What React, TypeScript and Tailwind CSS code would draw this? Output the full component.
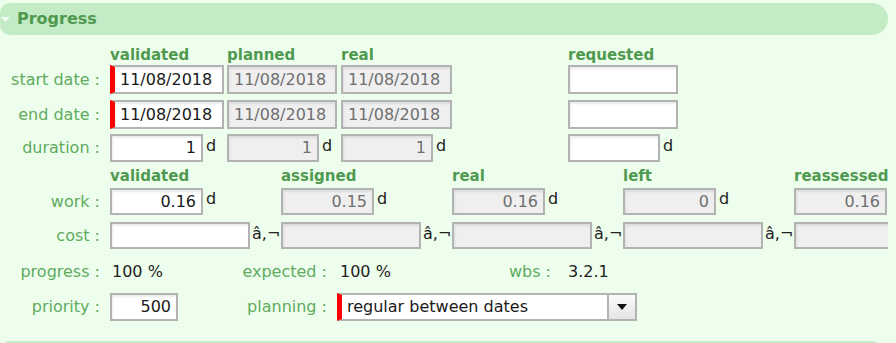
import React from "react";

// shared styles
const font = "font-['DejaVu_Sans',Verdana,sans-serif]";
const labelStyle = "text-[16px] leading-[18px] text-[#5fab5f] text-right whitespace-nowrap";
const headStyle = "text-[15px] leading-[18px] font-bold text-[#4f9a50] whitespace-nowrap";
const inputBase =
  "border-2 border-[#b3b3b3] text-[16px] leading-[18px] flex items-center overflow-hidden whitespace-nowrap shadow-[inset_1px_2px_2px_rgba(0,0,0,0.08)]";
const unitStyle = "text-[16px] leading-[18px] text-[#222] self-start whitespace-nowrap";

type BoxProps = {
  value?: string;
  w: string;
  h?: string;
  disabled?: boolean;
  required?: boolean;
  right?: boolean;
};

const Box = ({ value = "", w, h = "h-[28px]", disabled, required, right }: BoxProps) => (
  <div
    className={`${inputBase} ${w} ${h} ${disabled ? "bg-[#efefef] text-[#6f6f6f]" : "bg-white text-[#1a1a1a]"} ${
      required ? "border-l-[5px] border-l-[#ff0000]" : ""
    } ${right ? "justify-end pr-[5px]" : "pl-[5px]"} shrink-0`}
  >
    {value}
  </div>
);

const DateRow = ({ label, v }: { label: string; v: string }) => (
  <div className="flex items-center h-[29px]">
    <div className={`${labelStyle} w-[110px] pr-[10px] shrink-0`}>{label}</div>
    <div className="w-[117px] shrink-0">
      <Box value={v} w="w-[114px]" h="h-[29px]" required />
    </div>
    <div className="w-[114px] shrink-0">
      <Box value={v} w="w-[110px]" h="h-[29px]" disabled />
    </div>
    <div className="w-[227px] shrink-0">
      <Box value={v} w="w-[111px]" h="h-[29px]" disabled />
    </div>
    <Box w="w-[110px]" h="h-[29px]" />
  </div>
);

const WorkCell = ({ v, disabled, unit = true }: { v: string; disabled?: boolean; unit?: boolean }) => (
  <div className="w-[171px] shrink-0 flex">
    <Box value={v} w="w-[93px]" h="h-[27px]" disabled={disabled} right />
    {unit && <span className={`${unitStyle} ml-[3px] mt-[2px]`}>d</span>}
  </div>
);

const CostCell = ({ disabled, unit = true }: { disabled?: boolean; unit?: boolean }) => (
  <div className="w-[171px] shrink-0 flex">
    <Box w="w-[140px]" h="h-[27px]" disabled={disabled} />
    {unit && <span className={`${unitStyle} ml-[2px] mt-[3px]`}>â,¬</span>}
  </div>
);

export default function App() {
  return (
    <div className={`${font} w-[896px] h-[343px] bg-[#eefeec] overflow-hidden`}>
      <div className="w-[888px] overflow-hidden">
        {/* section header */}
        <div className="mt-[3px] h-[32px] bg-[#c3ebc5] rounded-l-[10px] rounded-r-[16px] flex items-center">
          <svg width="17" height="32" viewBox="0 0 17 32" className="shrink-0">
            <polygon points="1,14 10,14 5.5,19" fill="#f4fbf4" />
          </svg>
          <span className="text-[16px] font-bold text-[#4f9a50] leading-[18px]">Progress</span>
        </div>

        {/* dates block */}
        <div className="flex h-[30px] pt-[11px]">
          <div className="w-[110px] shrink-0" />
          <div className={`${headStyle} w-[117px]`}>validated</div>
          <div className={`${headStyle} w-[114px]`}>planned</div>
          <div className={`${headStyle} w-[227px]`}>real</div>
          <div className={headStyle}>requested</div>
        </div>
        <DateRow label="start date :" v="11/08/2018" />
        <div className="mt-[6px]">
          <DateRow label="end date :" v="11/08/2018" />
        </div>
        <div className="flex mt-[5px] h-[28px]">
          <div className={`${labelStyle} w-[110px] pr-[10px] shrink-0 self-center`}>duration :</div>
          <div className="w-[117px] shrink-0 flex">
            <Box value="1" w="w-[93px]" right />
            <span className={`${unitStyle} ml-[3px] mt-[3px]`}>d</span>
          </div>
          <div className="w-[114px] shrink-0 flex">
            <Box value="1" w="w-[92px]" disabled right />
            <span className={`${unitStyle} ml-[3px] mt-[3px]`}>d</span>
          </div>
          <div className="w-[227px] shrink-0 flex">
            <Box value="1" w="w-[92px]" disabled right />
            <span className={`${unitStyle} ml-[3px] mt-[3px]`}>d</span>
          </div>
          <div className="flex">
            <Box w="w-[92px]" />
            <span className={`${unitStyle} ml-[3px] mt-[3px]`}>d</span>
          </div>
        </div>

        {/* work / cost block */}
        <div className="flex h-[26px] pt-[5px]">
          <div className="w-[110px] shrink-0" />
          <div className={`${headStyle} w-[171px] shrink-0`}>validated</div>
          <div className={`${headStyle} w-[171px] shrink-0`}>assigned</div>
          <div className={`${headStyle} w-[171px] shrink-0`}>real</div>
          <div className={`${headStyle} w-[171px] shrink-0`}>left</div>
          <div className={`${headStyle} w-[171px] shrink-0`}>reassessed</div>
        </div>
        <div className="flex h-[27px]">
          <div className={`${labelStyle} w-[110px] pr-[10px] shrink-0 self-center`}>work :</div>
          <WorkCell v="0.16" />
          <WorkCell v="0.15" disabled />
          <WorkCell v="0.16" disabled />
          <WorkCell v="0" disabled />
          <WorkCell v="0.16" disabled unit={false} />
        </div>
        <div className="flex h-[27px] mt-[7px]">
          <div className={`${labelStyle} w-[110px] pr-[10px] shrink-0 self-center`}>cost :</div>
          <CostCell />
          <CostCell disabled />
          <CostCell disabled />
          <CostCell disabled />
          <CostCell disabled unit={false} />
        </div>

        {/* progress */}
        <div className="flex items-center h-[20px] mt-[13px] text-[16px] leading-[18px]">
          <div className={`${labelStyle} w-[110px] pr-[10px] shrink-0`}>progress :</div>
          <div className="w-[120px] shrink-0 pl-[2px] text-[#222]">100 %</div>
          <div className={`${labelStyle} w-[107px] pr-[10px] shrink-0`}>expected :</div>
          <div className="w-[120px] shrink-0 pl-[3px] text-[#222]">100 %</div>
          <div className={`${labelStyle} w-[106px] pr-[12px] shrink-0`}>wbs :</div>
          <div className="text-[#222] pl-[5px]">3.2.1</div>
        </div>

        <div className="flex items-center h-[28px] mt-[11px]">
          <div className={`${labelStyle} w-[110px] pr-[10px] shrink-0`}>priority :</div>
          <Box value="500" w="w-[68px]" right />
          <div className={`${labelStyle} w-[159px] pr-[10px] shrink-0`}>planning :</div>
          <div className="flex h-[28px] w-[300px] border-2 border-[#b3b3b3] border-l-[5px] border-l-[#ff0000] bg-white text-[16px] leading-[18px] text-[#1a1a1a]">
            <div className="flex-1 flex items-center pl-[5px] whitespace-nowrap">regular between dates</div>
            <div className="w-[28px] border-l-2 border-[#b3b3b3] bg-gradient-to-b from-[#fbfbfb] to-[#e4e4e4] flex items-center justify-center">
              <svg width="10" height="6" viewBox="0 0 10 6">
                <polygon points="0,0 10,0 5,6" fill="#111" />
              </svg>
            </div>
          </div>
        </div>

        <div className="mt-[20px] h-[20px] w-[882px] bg-[#c3ebc5] rounded-[12px]" />
      </div>
    </div>
  );
}
